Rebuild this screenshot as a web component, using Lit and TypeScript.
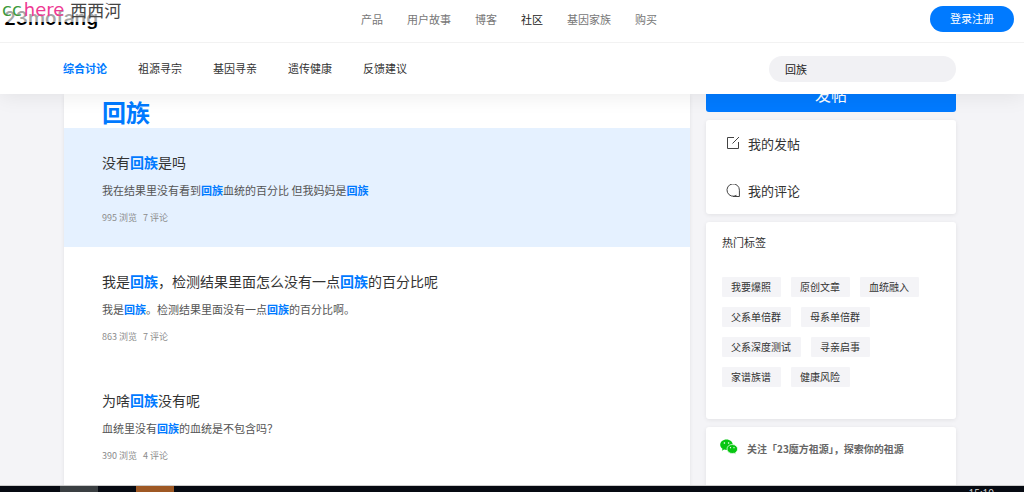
import { LitElement, html, css, svg } from "lit";
import { customElement } from "lit/decorators.js";

const KEYWORD = "回族";

/** Splits a text round the keyword and marks each occurrence. */
function marked(text: string) {
  const parts = text.split(KEYWORD);
  return parts.map((part, i) => (i ? html`<em>${KEYWORD}</em>${part}` : part));
}

const products = ["产品", "用户故事", "博客", "社区", "基因家族", "购买"];
const topics = ["综合讨论", "祖源寻宗", "基因寻亲", "遗传健康", "反馈建议"];
const tags = ["我要爆照", "原创文章", "血统融入", "父系单倍群", "母系单倍群", "父系深度测试", "寻亲启事", "家谱族谱", "健康风险"];
const posts = [
  { title: "没有回族是吗", text: "我在结果里没有看到回族血统的百分比 但我妈妈是回族", views: 995, replies: 7 },
  { title: "我是回族，检测结果里面怎么没有一点回族的百分比呢", text: "我是回族。检测结果里面没有一点回族的百分比啊。", views: 863, replies: 7 },
  { title: "为啥回族没有呢", text: "血统里没有回族的血统是不包含吗？", views: 390, replies: 4 },
];

const editIcon = svg`<svg class="icon" viewBox="0 0 14 14" aria-hidden="true"><path d="M8 .5H1.500v11h11V5M6.500 6.500L13 0" /></svg>`;
const commentIcon = svg`<svg class="icon" viewBox="0 0 14 14" aria-hidden="true"><path d="M10.500 11.300A6.200 6.200 0 1 1 13.400 6.200V12.500H7" /></svg>`;
const wechatIcon = svg`<svg class="wechat" viewBox="0 0 18 16" aria-hidden="true">
  <path fill="#07c612" d="M6.500.5C2.900.5.2 2.800.2 5.700c0 1.700.9 3.100 2.300 4.100l-.6 1.900 2.200-1.100c.8.2 1.500.3 2.400.3C10 10.900 12.800 8.600 12.800 5.700S10 .5 6.500.5z"/>
  <path fill="#07c612" stroke="#fff" stroke-width=".7" d="M12.300 5.500c-3.100 0-5.300 2-5.300 4.500s2.300 4.500 5.300 4.500c.6 0 1.300-.1 1.900-.3l1.800 1-.5-1.600c1.300-.9 2.100-2.100 2.100-3.600 0-2.500-2.400-4.500-5.300-4.500z"/>
  <g fill="#fff"><circle cx="4.400" cy="4" r=".8"/><circle cx="8.600" cy="4" r=".8"/><circle cx="10.500" cy="8.700" r=".65"/><circle cx="14" cy="8.700" r=".65"/></g>
</svg>`;

@customElement("app-root")
export class AppRoot extends LitElement {
  static styles = css`
    :host {
      display: flex;
      flex-direction: column;
      height: 100vh;
      overflow: hidden;
      background: #f4f4f7;
      color: #333;
      font: 11px/16px "Noto Sans CJK SC", sans-serif;
    }
    * { box-sizing: border-box; }
    h1, h2, h3, p, ul { margin: 0; padding: 0; font-weight: 400; }
    ul { list-style: none; }
    a { color: inherit; text-decoration: none; }
    button, input { font: inherit; border: 0; }
    em { font-style: normal; font-weight: 700; color: #007aff; }

    .head { position: relative; z-index: 1; background: #fff; box-shadow: 0 2px 20px rgba(0, 0, 0, 0.08); }
    .top {
      display: grid;
      grid-template-columns: 1fr auto 1fr;
      align-items: center;
      height: 43px;
      padding: 0 10px 4px 4px;
      border-bottom: 1px solid #f2f2f2;
    }
    .logo { justify-self: start; font: 600 19px/22px Inter, sans-serif; color: #000; }
    .products { display: flex; gap: 24px; color: #777; }
    .products .on { color: #222; }
    .login { justify-self: end; width: 84px; height: 26px; border-radius: 13px; background: #007aff; color: #fff; padding: 0 0 2px; }
    .sub { display: flex; justify-content: space-between; align-items: center; height: 51px; padding: 0 68px 0 63px; }
    .topics { display: flex; gap: 31px; padding-bottom: 2px; }
    .topics .on { color: #007aff; font-weight: 700; }
    .search { width: 187px; height: 26px; border-radius: 13px; background: #f1f1f4; padding: 0 16px; color: #222; outline: 0; }

    .stamp {
      position: absolute;
      left: 0;
      top: 0;
      height: 22px;
      padding: 0 3px 0 2px;
      display: flex;
      background: rgba(255, 255, 255, 0.65);
      font: 18px/20px "DejaVu Sans", sans-serif;
      white-space: nowrap;
    }
    .stamp .cc { color: #3c9a3c; }
    .stamp .here { margin-left: 2px; color: #ee3a93; }
    .stamp .name { margin-left: 6px; color: #444; font: 17px/20px "Noto Sans CJK SC", sans-serif; }

    .main { flex: 1; min-height: 0; overflow: hidden; display: flex; gap: 16px; padding: 0 68px 0 64px; }
    .results { flex: 1; min-width: 0; background: #fff; box-shadow: 0 1px 4px rgba(0, 0, 0, 0.08); }
    .results h1 { height: 34px; padding-left: 38px; font-size: 24px; line-height: 36px; font-weight: 700; color: #007aff; }
    .post { height: 119px; padding: 24px 38px 0; }
    .post.on { background: #e5f1ff; }
    .post h2 { font-size: 14px; line-height: 20px; }
    .post .text { margin-top: 10px; color: #555; }
    .post .meta { margin-top: 12px; font-size: 9px; color: #8c8c8c; display: flex; gap: 6px; }

    .side { flex: 0 0 250px; display: flex; flex-direction: column; gap: 8px; }
    .card, .publish { flex: none; border-radius: 3px; }
    .card { background: #fff; box-shadow: 0 1px 4px rgba(0, 0, 0, 0.08); }
    .publish { height: 34px; margin-top: -16px; background: #007aff; color: #fff; font-size: 16px; line-height: 32px; padding: 0 0 2px; }
    .mine { height: 94px; display: grid; grid-template-rows: 47px 47px; padding-left: 20px; font-size: 13px; }
    .mine a { display: flex; align-items: center; gap: 8px; }
    .icon { width: 14px; height: 14px; fill: none; stroke: #444; stroke-width: 1; }
    .hot { height: 197px; padding: 12px 24px 12px 16px; }
    .hot h3 { font-size: 11px; }
    .hot ul { display: flex; flex-wrap: wrap; gap: 10px; margin-top: 27px; }
    .hot li a { display: block; height: 20px; padding: 0 10px 0 9px; background: #f4f4f7; font-size: 10px; line-height: 20px; border-radius: 1px; }
    .follow { height: 90px; display: flex; gap: 9px; padding: 12px 14px; }
    .follow h3 { font-size: 10px; line-height: 20px; font-weight: 700; color: #666; }
    .wechat { width: 18px; height: 16px; }

    .taskbar { flex: none; height: 6px; overflow: hidden; display: flex; gap: 38px; padding: 0 30px 0 60px; background: #060a12; box-shadow: 0 -1px 0 #ccc; position: relative; }
    .taskbar i { width: 38px; background: #3a3f42; }
    .taskbar i + i { background: #9e5824; }
    .taskbar time { margin-left: auto; color: #ddd; font: 10px/14px "Open Sans", sans-serif; }
  `;

  render() {
    return html`
      <header class="head">
        <div class="top">
          <a class="logo" href="#">23mofang</a>
          <nav class="products">${products.map((p) => html`<a href="#" class=${p === "社区" ? "on" : ""}>${p}</a>`)}</nav>
          <button class="login">登录注册</button>
        </div>
        <div class="sub">
          <nav class="topics">${topics.map((t, i) => html`<a href="#" class=${i ? "" : "on"}>${t}</a>`)}</nav>
          <input class="search" type="text" aria-label="搜索" .value=${KEYWORD} />
        </div>
        <div class="stamp"><span class="cc">cc</span><span class="here">here</span><span class="name">西西河</span></div>
      </header>
      <main class="main">
        <section class="results">
          <h1>${KEYWORD}</h1>
          ${posts.map(
            (p, i) => html`<article class="post ${i ? "" : "on"}">
              <h2><a href="#">${marked(p.title)}</a></h2>
              <p class="text">${marked(p.text)}</p>
              <p class="meta"><span>${p.views} 浏览</span><span>${p.replies} 评论</span></p>
            </article>`
          )}
        </section>
        <aside class="side">
          <button class="publish">发帖</button>
          <nav class="card mine">
            <a href="#">${editIcon}<span>我的发帖</span></a>
            <a href="#">${commentIcon}<span>我的评论</span></a>
          </nav>
          <section class="card hot">
            <h3>热门标签</h3>
            <ul>${tags.map((t) => html`<li><a href="#">${t}</a></li>`)}</ul>
          </section>
          <section class="card follow">${wechatIcon}<h3>关注「23魔方祖源」，探索你的祖源</h3></section>
        </aside>
      </main>
      <footer class="taskbar"><i></i><i></i><time>15:10</time></footer>
    `;
  }
}
